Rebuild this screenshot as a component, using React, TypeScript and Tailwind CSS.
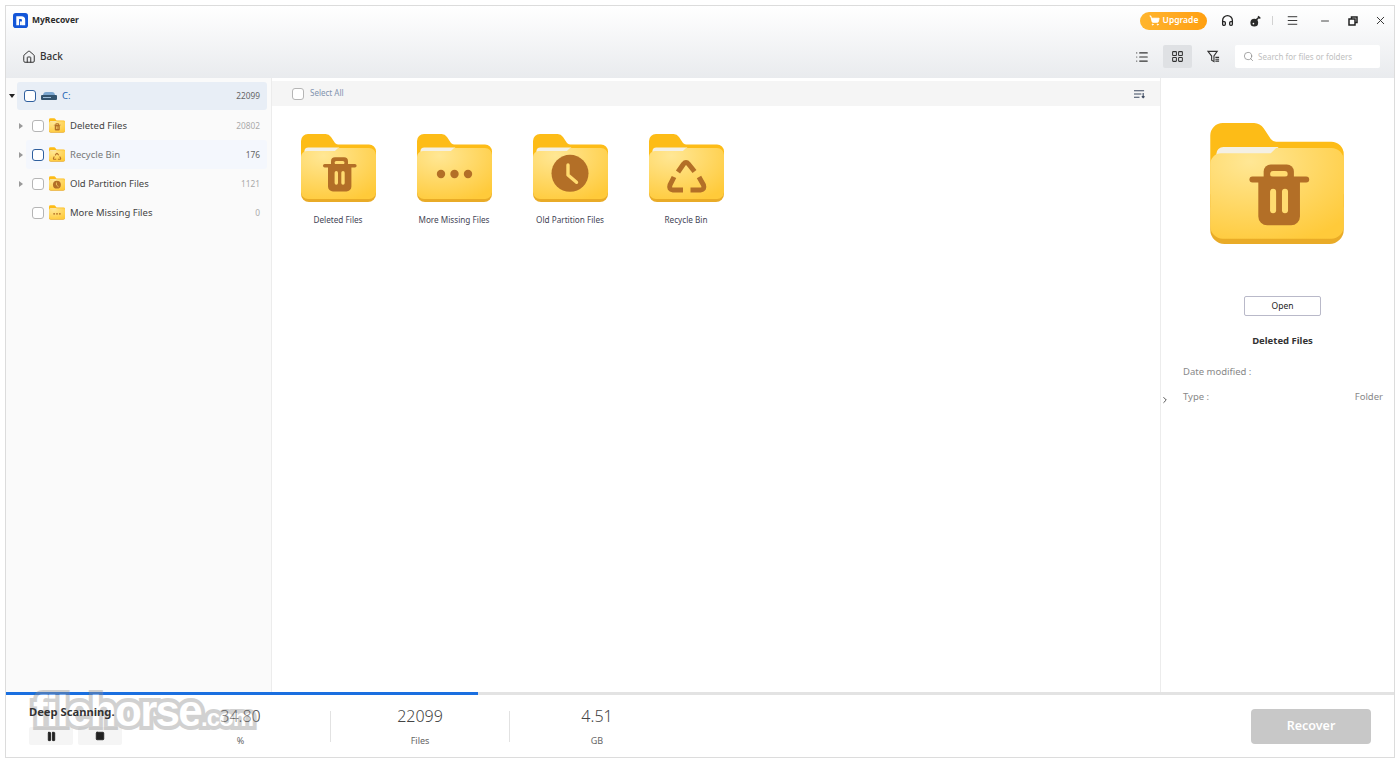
import React from "react";
import { Headphones, House, LayoutGrid, List, Menu, Minus, Pause, Search, ShoppingCart, Square, X, ChevronRight } from "lucide-react";

type Glyph = "trash" | "dots" | "clock" | "recycle";

const BROWN = "#b36f27";

function FolderIcon({ glyph, id, className }: { glyph: Glyph; id: string; className: string }) {
  return (
    <svg viewBox="0 0 75 68" className={className}>
      <defs>
        <radialGradient id={id} cx="0.3" cy="0.15" r="0.95">
          <stop offset="0" stopColor="#ffe795" />
          <stop offset="1" stopColor="#ffca3a" />
        </radialGradient>
      </defs>
      <path d="M0 7a7 7 0 0 1 7-7h17a7 7 0 0 1 6 3l4 6a4 4 0 0 0 3 1.500h31a7 7 0 0 1 7 7v30H0Z" fill="#fdbc17" />
      <path d="M3.400 18v-.5a4 4 0 0 1 4-4h31L34 17.500Z" fill="#f4f0e4" />
      <path d="M0 60a8 8 0 0 0 8 8h59a8 8 0 0 0 8-8V40H0Z" fill="#e9ab27" />
      <path d="M0 23a6 6 0 0 1 6-6h28l3-3h31a7 7 0 0 1 7 7v37a7 7 0 0 1-7 7H7a7 7 0 0 1-7-7Z" fill={`url(#${id})`} />
      {glyph === "trash" && (
        <g>
          <path d="M30 32v-4.700a4 4 0 0 1 4-4h9a4 4 0 0 1 4 4V32Z" fill={BROWN} />
          <rect x="33.600" y="27" width="9.900" height="3.400" rx="1.700" fill="#ffdb70" />
          <rect x="22" y="30" width="33.600" height="3.400" rx="1.700" fill={BROWN} />
          <path d="M27 32h23.400v20.500a5 5 0 0 1-5 5H32a5 5 0 0 1-5-5Z" fill={BROWN} />
          <rect x="33.600" y="37" width="3.400" height="13.700" rx="1.700" fill="#ffdb70" />
          <rect x="40.300" y="37" width="3.400" height="13.700" rx="1.700" fill="#ffdb70" />
        </g>
      )}
      {glyph === "dots" && (
        <g fill={BROWN}>
          <circle cx="24" cy="40" r="4.200" />
          <circle cx="37.500" cy="40" r="4.200" />
          <circle cx="51" cy="40" r="4.200" />
        </g>
      )}
      {glyph === "clock" && (
        <g>
          <circle cx="37" cy="39.300" r="18.500" fill={BROWN} />
          <path d="M35 31v10l8.500 7.300" fill="none" stroke="#ffdb70" strokeWidth="3.400" strokeLinecap="round" strokeLinejoin="round" />
        </g>
      )}
      {glyph === "recycle" && (
        <g fill="none" stroke={BROWN} strokeWidth="5">
          <path d="M29 38l5.500-8q2.500-3 5 0l6 7.500" />
          <path d="M25 43l-4 8q-1.500 4.500 3 5h10" />
          <path d="M50 43l4.500 8q1.500 4.500-3 5h-10" />
        </g>
      )}
    </svg>
  );
}

function Check({ active }: { active?: boolean }) {
  return (
    <span className={`block w-3 h-3 rounded-[3px] border bg-white shrink-0 ${active ? "border-[#2f5f9e]" : "border-[#b5b5b5]"}`} />
  );
}

const treeItems: { label: string; count: string; glyph: Glyph; arrow: boolean; hover?: boolean; countColor: string }[] = [
  { label: "Deleted Files", count: "20802", glyph: "trash", arrow: true, countColor: "text-[#aaaaaa]" },
  { label: "Recycle Bin", count: "176", glyph: "recycle", arrow: true, hover: true, countColor: "text-[#666666]" },
  { label: "Old Partition Files", count: "1121", glyph: "clock", arrow: true, countColor: "text-[#aaaaaa]" },
  { label: "More Missing Files", count: "0", glyph: "dots", arrow: false, countColor: "text-[#aaaaaa]" },
];

const gridItems: { label: string; glyph: Glyph }[] = [
  { label: "Deleted Files", glyph: "trash" },
  { label: "More Missing Files", glyph: "dots" },
  { label: "Old Partition Files", glyph: "clock" },
  { label: "Recycle Bin", glyph: "recycle" },
];

const stats = [
  { value: "34.80", unit: "%", cls: "w-[180px] border-r" },
  { value: "22099", unit: "Files", cls: "w-[179px] border-r" },
  { value: "4.51", unit: "GB", cls: "w-[174px]" },
];

export default function App() {
  return (
    <div className="w-[1400px] h-[762px] bg-white pt-[5px] pl-[5px] overflow-hidden text-[#333333] [font-family:'Noto_Sans',sans-serif]">
      <div className="relative w-[1390px] h-[753px] border border-[#dcdcdc] flex flex-col">
        {/* Header */}
        <div className="h-[72px] shrink-0 bg-gradient-to-b from-white to-[#e9ebee]">
          <div className="h-[29px] flex items-center pl-[7px] pr-[7px]">
            <svg viewBox="0 0 16 16" className="w-[15px] h-[15px]">
              <rect width="16" height="16" rx="3" fill="#1456d8" />
              <path d="M3.500 3.500H9a4 4 0 0 1 4 4V13H9.500V7.500L9 6.500H6.500V13h-3Z" fill="#fff" />
              <rect x="7.500" y="9" width="2" height="4" fill="#fff" />
            </svg>
            <span className="ml-[4px] text-[8.500px] font-bold text-[#2b2b2b]">MyRecover</span>
            <div className="ml-auto flex items-center">
              <div className="w-[67px] h-[18px] rounded-full bg-gradient-to-r from-[#ffb52e] to-[#ff9f0f] flex items-center justify-center gap-[3px]">
                <ShoppingCart className="w-[11px] h-[11px] text-white" fill="#fff" strokeWidth={2} />
                <span className="text-[8.500px] font-semibold text-white">Upgrade</span>
              </div>
              <Headphones className="ml-[14px] w-[13px] h-[13px] text-[#222222]" strokeWidth={2.4} />
              <svg viewBox="0 0 14 14" className="ml-[16px] w-[12px] h-[12px]">
                <circle cx="5" cy="9" r="4.500" fill="#2a2a2a" />
                <path d="M7 6l4-4M9.500 1.500l2.500 2.500" stroke="#2a2a2a" strokeWidth="1.800" fill="none" />
                <circle cx="4" cy="10" r="1" fill="#fff" />
              </svg>
              <span className="ml-[10px] w-px h-[9px] bg-[#d2d2d2]" />
              <Menu className="ml-[13px] w-[13px] h-[13px] text-[#333333]" strokeWidth={1.8} />
              <Minus className="ml-[20px] w-[12px] h-[12px] text-[#333333]" strokeWidth={1.8} />
              <svg viewBox="0 0 10 10" className="ml-[17px] w-[10px] h-[10px]" fill="none" stroke="#222222" strokeWidth="1.500">
                <rect x="1" y="3" width="6" height="6" />
                <path d="M3.500 3V1H9v5.500H7" />
              </svg>
              <X className="ml-[16px] w-[13px] h-[13px] text-[#333333]" strokeWidth={1.8} />
            </div>
          </div>
          <div className="h-[43px] flex items-center pl-[16px] pr-[14px]">
            <House className="w-[14px] h-[14px] text-[#333333]" strokeWidth={1.7} />
            <span className="ml-[4px] text-[10px] font-medium text-[#333333]">Back</span>
            <div className="ml-auto flex items-center">
              <List className="w-[14px] h-[14px] text-[#333333]" strokeWidth={1.9} />
              <div className="ml-[14px] w-[29px] h-[23px] rounded-[2px] bg-[#dfe1e4] flex items-center justify-center">
                <LayoutGrid className="w-[13px] h-[13px] text-[#333333]" strokeWidth={1.9} />
              </div>
              <svg viewBox="0 0 14 14" className="ml-[15px] w-[13px] h-[13px]" fill="none" stroke="#333333" strokeWidth="1.200">
                <path d="M1 1.500h10L7.500 6.500v6L5 11V6.500Z" />
                <path d="M9 8h4M9 10h4M9 12h4" />
              </svg>
              <div className="ml-[15px] w-[145px] h-[23px] rounded-[2px] bg-white flex items-center pl-[8px]">
                <Search className="w-[11px] h-[11px] text-[#808080]" strokeWidth={1.5} />
                <span className="ml-[4px] text-[8px] text-[#c0c0c0]">Search for files or folders</span>
              </div>
            </div>
          </div>
        </div>

        {/* Body */}
        <div className="flex-1 min-h-0 flex">
          <div className="w-[266px] shrink-0 bg-[#fafafa] border-r border-[#ececec] pt-[4px] pr-[4px] text-[9.500px]">
            <div className="ml-[11px] h-[28px] rounded-[3px] bg-[#e8eef6] flex items-center pr-[7px] relative">
              <span className="absolute left-[-8px] w-0 h-0 border-x-[3px] border-x-transparent border-t-[4px] border-t-[#222222]" />
              <span className="ml-[7px]"><Check active /></span>
              <svg viewBox="0 0 16 8" className="ml-[5px] w-[16px] h-[8px]">
                <path d="M2 3q.5-3 3-3h6q2.500 0 3 3Z" fill="#7ba6cf" />
                <rect y="3" width="16" height="5" rx="1" fill="#33546f" />
                <rect x="2" y="5" width="8" height="1" fill="#9fc0dc" />
              </svg>
              <span className="ml-[5px] pt-px text-[#1d62b3]">C:</span>
              <span className="ml-auto pt-px text-[8.300px] text-[#666666]">22099</span>
            </div>
            <div className="mt-px flex flex-col">
              {treeItems.map(item => (
                <div key={item.label} className={`h-[29px] ml-[20px] flex items-center pr-[7px] relative rounded-[3px] ${item.hover ? "bg-[#f4f7fd]" : ""}`}>
                  {item.arrow && (
                    <span className="absolute left-[-7px] w-0 h-0 border-y-[3px] border-y-transparent border-l-[4px] border-l-[#999999]" />
                  )}
                  <span className="ml-[6px]"><Check active={item.hover} /></span>
                  <FolderIcon glyph={item.glyph} id={`tree-${item.glyph}`} className="ml-[5px] w-[16px] h-[15px] shrink-0" />
                  <span className={`ml-[5px] pt-[2px] ${item.hover ? "text-[#777777]" : "text-[#444444]"}`}>{item.label}</span>
                  <span className={`ml-auto pt-px text-[8.300px] ${item.countColor}`}>{item.count}</span>
                </div>
              ))}
            </div>
          </div>

          <div className="flex-1 min-w-0 bg-white pt-[3px]">
            <div className="h-[25px] bg-[#f5f5f5] flex items-center pl-[20px] pr-[15px]">
              <Check />
              <span className="ml-[6px] pb-px text-[8px] text-[#8193ae]">Select All</span>
              <svg viewBox="0 0 12 10" className="ml-auto w-[11px] h-[10px]" fill="none" stroke="#3d4a60" strokeWidth="1.200">
                <path d="M0 1.500h11M0 5h8M0 8.500h6" />
                <path d="M10 4v5M8.500 7.500L10 9l1.500-1.500" />
              </svg>
            </div>
            <div className="flex pl-[8px] pt-[28px]">
              {gridItems.map(item => (
                <div key={item.label} className="w-[116px] flex flex-col items-center">
                  <FolderIcon glyph={item.glyph} id={`grid-${item.glyph}`} className="w-[75px] h-[68px]" />
                  <span className="mt-[12px] text-[8.200px] text-[#444455]">{item.label}</span>
                </div>
              ))}
            </div>
          </div>

          <div className="relative w-[234px] shrink-0 border-l border-[#ececec] flex flex-col items-center pt-[45px] pl-[10px]">
            <span className="absolute left-[-1px] top-[317px]"><ChevronRight className="w-[10px] h-[10px] text-[#555555]" strokeWidth={2.4} /></span>
            <FolderIcon glyph="trash" id="detail-trash" className="ml-[-11px] w-[134px] h-[121px]" />
            <div className="mt-[52px] w-[77px] h-[20px] rounded-[2px] border border-[#b9b9c9] flex items-center justify-center text-[8.500px] text-[#222222]">Open</div>
            <div className="mt-[18px] text-[9.500px] font-bold text-[#333333]">Deleted Files</div>
            <div className="mt-[17px] w-full pl-[12px] pr-[11px] text-[9.500px] text-[#888888]">
              <div>Date modified :</div>
              <div className="mt-[10px] flex justify-between"><span>Type :</span><span>Folder</span></div>
            </div>
          </div>
        </div>

        {/* Footer */}
        <div className="h-[3px] shrink-0 bg-[#e3e3e3]">
          <div className="h-full w-[472px] bg-[#1a6fe0]" />
        </div>
        <div className="relative h-[62px] shrink-0 flex items-center pl-[23px]">
          <div className="w-[122px] pb-[2px]">
            <div className="relative z-10 text-[11.200px] font-bold text-[#333333] leading-[14px]">Deep Scanning.</div>
            <div className="mt-[8px] flex gap-[5px]">
              <div className="w-[44px] h-[18px] rounded-[2px] bg-[#f5f5f5] flex items-center justify-center">
                <Pause className="w-[11px] h-[11px] text-[#222222]" fill="#222222" />
              </div>
              <div className="w-[44px] h-[18px] rounded-[2px] bg-[#f5f5f5] flex items-center justify-center">
                <Square className="w-[10px] h-[10px] text-[#222222]" fill="#222222" />
              </div>
            </div>
          </div>
          {stats.map(s => (
            <div key={s.unit} className={`${s.cls} h-[31px] border-[#e2e2e2] relative flex flex-col items-center justify-center`}>
              <div className="text-[16px] leading-[20px] font-light text-[#444444]">{s.value}</div>
              <div className="mt-[9px] text-[9px] leading-[12px] text-[#666666]">{s.unit}</div>
            </div>
          ))}
          <div className="ml-auto mr-[23px] w-[120px] h-[35px] rounded-[4px] bg-[#c8c8c8] flex items-center justify-center text-[12.500px] font-semibold text-white">Recover</div>
          {/* watermark */}
          <div className="absolute left-[27px] top-[-8px] flex items-baseline leading-[48px] font-bold text-white opacity-40 [font-family:'Liberation_Sans',sans-serif] [-webkit-text-stroke:8px_#8f8f8f] [paint-order:stroke_fill] pointer-events-none">
            <span className="text-[44px] tracking-[-1.700px]">filehorse</span>
            <span className="text-[24px] tracking-[-1px]">.com</span>
          </div>
        </div>
      </div>
    </div>
  );
}
